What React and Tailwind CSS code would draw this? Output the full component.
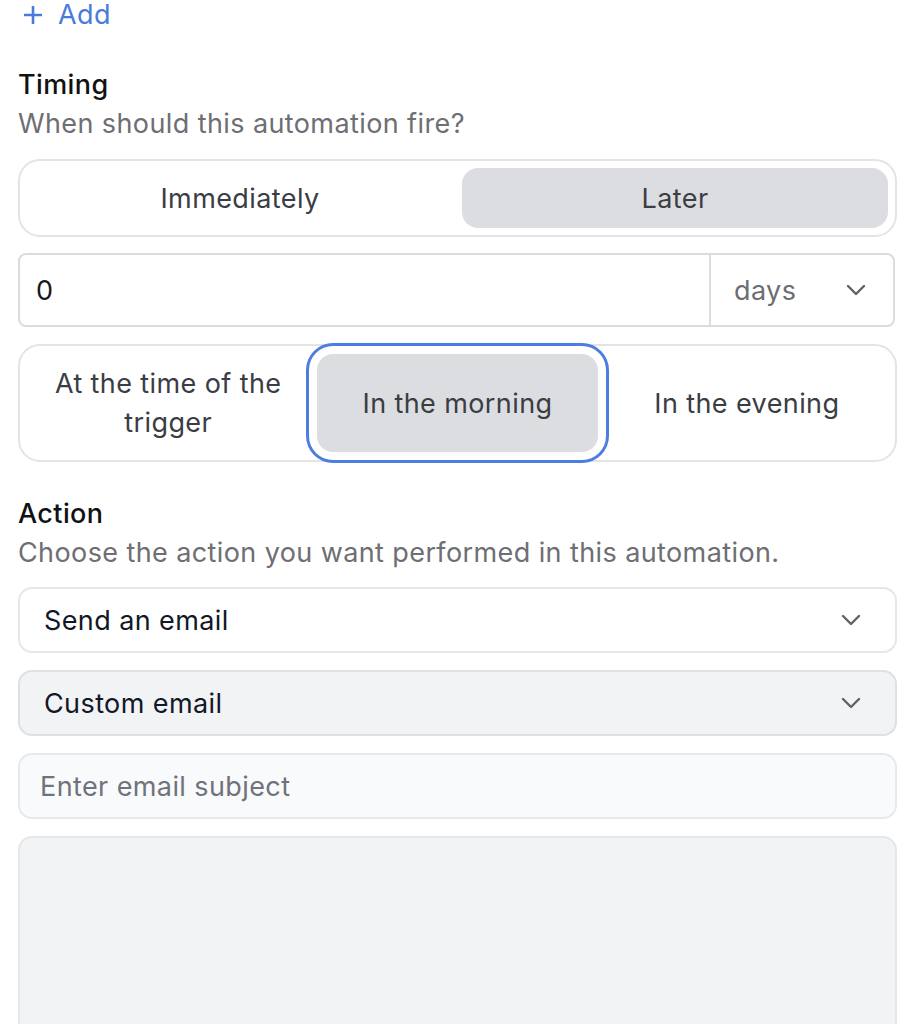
import React from 'react';

function Chevron() {
  return (
    <svg width="20" height="12" viewBox="0 0 20 12" fill="none" className="shrink-0">
      <path d="M2 2l8 8 8-8" stroke="#5f6368" strokeWidth="2.4" strokeLinecap="round" strokeLinejoin="round" />
    </svg>
  );
}

function Segmented({ options, selected, tall }) {
  return (
    <div className={`flex gap-[9px] border-2 border-[#e3e4e6] rounded-[22px] ${tall ? 'p-[8px] h-[118px]' : 'p-[7px] h-[78px]'}`}>
      {options.map((opt, i) => (
        <div
          key={i}
          className={`flex-1 flex items-center justify-center text-center px-3 text-[#3a3d44] rounded-[16px] ${
            i === selected ? 'bg-[#dcdde0]' : ''
          } ${i === selected && tall ? 'ring-[3px] ring-[#4c7ee0] ring-offset-[8px] ring-offset-white' : ''}`}
        >
          {opt}
        </div>
      ))}
    </div>
  );
}

export default function App() {
  return (
    <div className="bg-white min-h-screen pl-[18px] pr-[17px] text-[27px] tracking-[0.4px] leading-[39px] font-['Inter',sans-serif] text-[#111]">
      {/* add link */}
      <div className="flex items-center h-[30px] leading-[30px] text-[#4a7bdc]">
        <svg width="20" height="20" viewBox="0 0 20 20" className="ml-[5px] mr-[15px]">
          <path d="M10 1v18M1 10h18" stroke="#4a7bdc" strokeWidth="2.6" />
        </svg>
        <span>Add</span>
      </div>

      {/* Timing section */}
      <div className="mt-[35px] font-medium">Timing</div>
      <div className="text-[#6e6e73]">When should this automation fire?</div>

      <div className="mt-[16px]">
        <Segmented options={['Immediately', 'Later']} selected={1} />
      </div>

      <div className="mt-[16px] flex h-[74px] border-2 border-[#dcdcde] rounded-[8px] mr-[2px]">
        <div className="flex-1 flex items-center pl-[16px] text-[#18181b]">0</div>
        <div className="w-[184px] border-l-2 border-[#dcdcde] flex items-center justify-between pl-[23px] pr-[27px] text-[#6b6e75]">
          <span>days</span>
          <Chevron />
        </div>
      </div>

      <div className="mt-[17px]">
        <Segmented
          options={['At the time of the trigger', 'In the morning', 'In the evening']}
          selected={1}
          tall
        />
      </div>

      {/* Action section */}
      <div className="mt-[32px] font-medium">Action</div>
      <div className="text-[#6e6e73]">Choose the action you want performed in this automation.</div>

      <div className="mt-[15px] flex flex-col gap-[17px]">
        <div className="h-[66px] flex items-center justify-between border-2 border-[#e6e7e9] rounded-[14px] bg-white pl-[24px] pr-[34px] text-[#111827]">
          <span>Send an email</span>
          <Chevron />
        </div>
        <div className="h-[66px] flex items-center justify-between border-2 border-[#dfe0e3] rounded-[14px] bg-[#f2f3f5] pl-[24px] pr-[34px] text-[#111827]">
          <span>Custom email</span>
          <Chevron />
        </div>
        <input
          placeholder="Enter email subject"
          className="h-[66px] w-full border-2 border-[#e8e9eb] rounded-[14px] bg-[#f9fafb] px-[20px] text-[27px] tracking-[0.4px] placeholder:text-[#6f737b] outline-none"
        />
        <textarea className="h-[240px] w-full border-2 border-[#e6e7e9] rounded-[14px] bg-[#f2f3f5] resize-none outline-none" />
      </div>
    </div>
  );
}
